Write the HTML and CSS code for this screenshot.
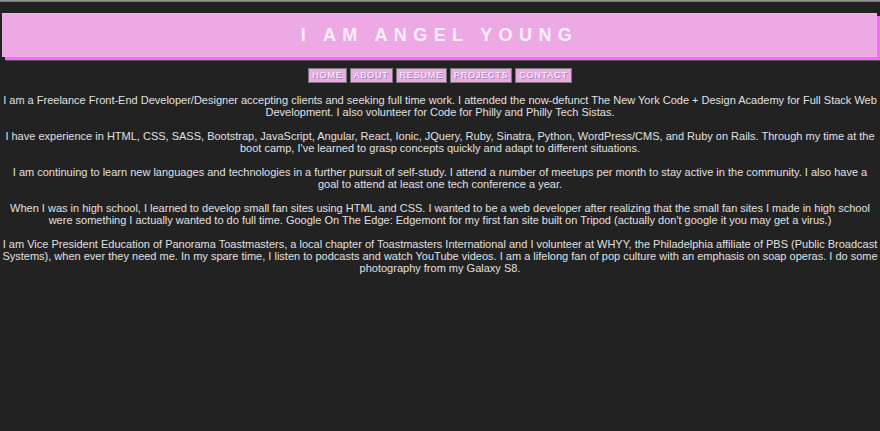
FILE: index.html
```html
<!DOCTYPE html>
<html>
<head>
<meta charset="utf-8">
<link rel="stylesheet" href="styles.css">
</head>
<body>
<div class="topline"></div>
<header class="banner">
  <h1 class="title">I AM ANGEL YOUNG</h1>
</header>
<nav class="nav">
  <a class="nav-btn" href="#">Home</a>
  <a class="nav-btn" href="#">About</a>
  <a class="nav-btn" href="#">Resume</a>
  <a class="nav-btn" href="#">Projects</a>
  <a class="nav-btn" href="#">Contact</a>
</nav>
<main class="content">
  <p>I am a Freelance Front-End Developer/Designer accepting clients and seeking full time work. I attended the now-defunct The New York Code + Design Academy for Full Stack Web Development. I also volunteer for Code for Philly and Philly Tech Sistas.</p>
  <p>I have experience in HTML, CSS, SASS, Bootstrap, JavaScript, Angular, React, Ionic, JQuery, Ruby, Sinatra, Python, WordPress/CMS, and Ruby on Rails. Through my time at the boot camp, I've learned to grasp concepts quickly and adapt to different situations.</p>
  <p>I am continuing to learn new languages and technologies in a further pursuit of self-study. I attend a number of meetups per month to stay active in the community. I also have a goal to attend at least one tech conference a year.</p>
  <p>When I was in high school, I learned to develop small fan sites using HTML and CSS. I wanted to be a web developer after realizing that the small fan sites I made in high school were something I actually wanted to do full time. Google On The Edge: Edgemont for my first fan site built on Tripod (actually don't google it you may get a virus.)</p>
  <p>I am Vice President Education of Panorama Toastmasters, a local chapter of Toastmasters International and I volunteer at WHYY, the Philadelphia affiliate of PBS (Public Broadcast Systems), when ever they need me. In my spare time, I listen to podcasts and watch YouTube videos. I am a lifelong fan of pop culture with an emphasis on soap operas. I do some photography from my Galaxy S8.</p>
</main>
</body>
</html>
```

FILE: styles.css
```css
html, body {
  margin: 0;
  padding: 0;
  background: #222222;
}
body {
  font-family: "Liberation Sans", Arial, sans-serif;
  color: #e0e0e0;
  min-height: 431px;
}
.topline {
  height: 2px;
  background: linear-gradient(#a0a0a0, #6a6a6a);
}
.banner {
  margin: 11px 3px 0 2px;
  height: 44px;
  background: #eca9e4;
  box-shadow: 3px 3px 0 #ff66ff, 4px 4px 0 #555;
  outline: 1px dotted #f7b8f0;
  outline-offset: -1px;
  display: flex;
  align-items: center;
  justify-content: center;
}
.title {
  margin: 0;
  font-size: 18px;
  font-weight: bold;
  letter-spacing: 6.4px;
  color: #f9eef8;
  padding-left: 0;
}
.nav {
  display: flex;
  justify-content: center;
  gap: 3px;
  margin-top: 11px;
}
.nav-btn {
  display: block;
  height: 13px;
  line-height: 13px;
  padding: 0 3px;
  background: #eca9e4;
  border: 1px solid #777;
  color: #fdf4fc;
  font-size: 9px;
  letter-spacing: 0.8px;
  text-transform: uppercase;
  text-decoration: none;
  text-shadow: 1px 1px 0 #8a8ab0;
}
.content {
  padding: 0 2px;
  margin-top: 11px;
}
.content p {
  margin: 12px 0;
  font-size: 11px;
  line-height: 12px;
  text-align: center;
}
.content p:first-child {
  margin-top: 0;
}
```
